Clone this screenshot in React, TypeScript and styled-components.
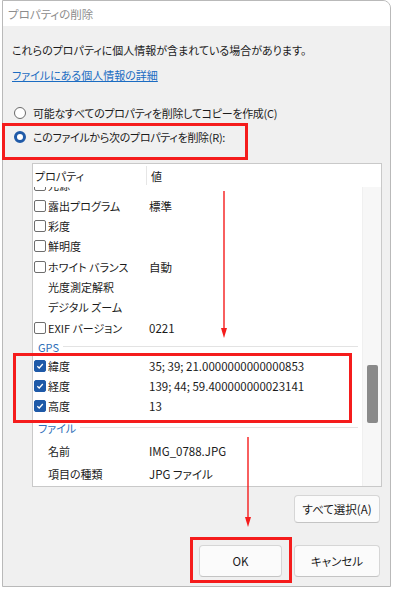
import styled, { createGlobalStyle } from "styled-components"

const FONT = `"Noto Sans CJK JP", "Noto Sans", sans-serif`
const RED = "#f51c1c"
const BLUE = "#1f5aa8"

const GlobalStyle = createGlobalStyle`
body {
    margin: 0;
    background: #ffffff;
    font-family: ${FONT};
    font-feature-settings: "palt";
    color: #1b1b1b;
}
`

const Canvas = styled.div`
position: relative;
width: 393px;
height: 591px;
overflow: hidden;
background: #ffffff;
`

const Dialog = styled.div`
margin-left: 2px;
width: 387px;
height: 585px;
border: 1px solid #b9b9b9;
border-top-right-radius: 8px;
background: #f0f0f0;
display: flex;
flex-direction: column;
overflow: hidden;
`

const TitleBar = styled.div`
height: 25px;
background: #ffffff;
display: flex;
align-items: center;
padding-left: 5px;
`

const Title = styled.span`
font-size: 11.5px;
color: #8d8d8d;
`

const Body = styled.div`
flex: 1;
display: flex;
flex-direction: column;
padding: 0 10px 9px 9px;
`

const Intro = styled.div`
margin-top: 16px;
font-size: 11px;
line-height: 16px;
`

const HelpLink = styled.a`
margin-top: 9px;
font-size: 11px;
line-height: 16px;
color: #1b6cc2;
text-decoration: underline;
align-self: flex-start;
`

const RadioRow = styled.div<{ $gap: number }>`
margin-top: ${p => p.$gap}px;
display: flex;
align-items: center;
height: 16px;
font-size: 11px;
letter-spacing: -0.3px;
`

const Radio = styled.span<{ $on?: boolean }>`
box-sizing: border-box;
width: 12px;
height: 12px;
margin: 0 7px 0 2px;
border-radius: 50%;
border: ${p => (p.$on ? `3.5px solid ${BLUE}` : "1px solid #6a6a6a")};
background: #ffffff;
`

const ListBox = styled.div`
margin: 18px 0 0 20px;
width: 348px;
height: 322px;
border: 1px solid #c9c9c9;
background: #ffffff;
display: flex;
flex-direction: column;
`

const ListHeader = styled.div`
height: 23px;
display: grid;
grid-template-columns: 113px 1fr;
font-size: 11px;
`

const HeaderCell = styled.div<{ $divider?: boolean }>`
display: flex;
align-items: center;
padding-left: ${p => (p.$divider ? 4 : 2)}px;
border-left: ${p => (p.$divider ? "1px solid #e6e6e6" : "none")};
margin: 2px 0;
`

const ListBody = styled.div`
flex: 1;
display: flex;
min-height: 0;
`

const Rows = styled.div`
flex: 1;
overflow: hidden;
`

const RowsInner = styled.div`
margin-top: -11.7px;
`

const Row = styled.div<{ $h: number }>`
height: ${p => p.$h}px;
display: grid;
grid-template-columns: 116px 1fr;
align-items: center;
font-size: 11px;
`

const NameCell = styled.div`
display: flex;
align-items: center;
padding-left: 15px;
white-space: nowrap;
`

const ValueCell = styled.div`
white-space: nowrap;
font-size: 11.5px;
`

const Check = styled.span<{ $on?: boolean }>`
box-sizing: border-box;
width: 12px;
height: 12px;
margin: 0 2px 0 -14px;
border-radius: 2px;
border: 1px solid ${p => (p.$on ? BLUE : "#6e6e6e")};
background: ${p => (p.$on ? BLUE : "#ffffff")};
display: flex;
align-items: center;
justify-content: center;
`

const GroupHeader = styled.div<{ $h: number }>`
height: ${p => p.$h}px;
display: flex;
align-items: center;
padding: 0 4px 0 5px;
gap: 4px;
`

const GroupLabel = styled.span`
font-size: 11px;
color: #2f6fb8;
`

const GroupLine = styled.span`
flex: 1;
height: 1px;
background: #e3e3e3;
`

const ScrollTrack = styled.div`
width: 18px;
background: #f7f7f7;
border-left: 1px solid #f0f0f0;
display: flex;
justify-content: center;
`

const ScrollThumb = styled.div`
margin-top: 178px;
width: 11px;
height: 58px;
border-radius: 2px;
background: #8a8a8a;
`

const ButtonRow = styled.div<{ $gap: number }>`
margin-top: ${p => p.$gap}px;
display: flex;
justify-content: flex-end;
gap: 12px;
`

const Button = styled.button<{ $w: number; $h: number }>`
box-sizing: border-box;
width: ${p => p.$w}px;
height: ${p => p.$h}px;
border: 1px solid #d6d6d6;
border-bottom-color: #c4c4c4;
border-radius: 4px;
background: #fbfbfb;
font-family: ${FONT};
font-feature-settings: "palt";
font-size: 11.5px;
color: #1b1b1b;
padding: 0;
`

const Mark = styled.div<{ $x: number; $y: number; $w: number; $h: number }>`
position: absolute;
left: ${p => p.$x}px;
top: ${p => p.$y}px;
width: ${p => p.$w}px;
height: ${p => p.$h}px;
box-sizing: border-box;
border: 3.5px solid ${RED};
`

const ArrowSvg = styled.svg<{ $x: number; $y: number }>`
position: absolute;
left: ${p => p.$x - 4}px;
top: ${p => p.$y}px;
`

const Arrow = ({ x, y, len }: { x: number; y: number; len: number }) => (
    <ArrowSvg $x={x} $y={y} width="8" height={len}>
        <line x1="4" y1="0" x2="4" y2={len - 8} stroke={RED} strokeWidth="1.4" />
        <polygon points={`1,${len - 10} 7,${len - 10} 4,${len}`} fill={RED} />
    </ArrowSvg>
)

const Tick = () => (
    <svg width="8" height="8" viewBox="0 0 8 8">
        <path d="M1.3 4.2 L3.2 6 L6.8 2" fill="none" stroke="#fff" strokeWidth="1.3" />
    </svg>
)

type Item =
    | { kind: "row"; name: string; value?: string; check?: "off" | "on"; h: number }
    | { kind: "group"; name: string; h: number }

const R = 20.33

const items: Item[] = [
    { kind: "row", name: "光源", check: "off", h: R },
    { kind: "row", name: "露出プログラム", value: "標準", check: "off", h: R },
    { kind: "row", name: "彩度", check: "off", h: R },
    { kind: "row", name: "鮮明度", check: "off", h: R },
    { kind: "row", name: "ホワイト バランス", value: "自動", check: "off", h: R },
    { kind: "row", name: "光度測定解釈", h: R },
    { kind: "row", name: "デジタル ズーム", h: R },
    { kind: "row", name: "EXIF バージョン", value: "0221", check: "off", h: R },
    { kind: "group", name: "GPS", h: 18 },
    { kind: "row", name: "緯度", value: "35; 39; 21.0000000000000853", check: "on", h: 20 },
    { kind: "row", name: "経度", value: "139; 44; 59.400000000023141", check: "on", h: 20 },
    { kind: "row", name: "高度", value: "13", check: "on", h: 20 },
    { kind: "group", name: "ファイル", h: 24 },
    { kind: "row", name: "名前", value: "IMG_0788.JPG", h: 23 },
    { kind: "row", name: "項目の種類", value: "JPG ファイル", h: 22 },
]

export default function App() {
    return (
        <Canvas>
            <GlobalStyle />
            <Dialog>
                <TitleBar>
                    <Title>プロパティの削除</Title>
                </TitleBar>
                <Body>
                    <Intro>これらのプロパティに個人情報が含まれている場合があります。</Intro>
                    <HelpLink href="#">ファイルにある個人情報の詳細</HelpLink>
                    <RadioRow $gap={22}>
                        <Radio />
                        可能なすべてのプロパティを削除してコピーを作成(C)
                    </RadioRow>
                    <RadioRow $gap={8}>
                        <Radio $on />
                        このファイルから次のプロパティを削除(R):
                    </RadioRow>
                    <ListBox>
                        <ListHeader>
                            <HeaderCell>プロパティ</HeaderCell>
                            <HeaderCell $divider>値</HeaderCell>
                        </ListHeader>
                        <ListBody>
                            <Rows>
                                <RowsInner>
                                    {items.map((it, i) =>
                                        it.kind === "group" ? (
                                            <GroupHeader key={i} $h={it.h}>
                                                <GroupLabel>{it.name}</GroupLabel>
                                                <GroupLine />
                                            </GroupHeader>
                                        ) : (
                                            <Row key={i} $h={it.h}>
                                                <NameCell>
                                                    {it.check && (
                                                        <Check $on={it.check === "on"}>
                                                            {it.check === "on" && <Tick />}
                                                        </Check>
                                                    )}
                                                    {it.name}
                                                </NameCell>
                                                <ValueCell>{it.value}</ValueCell>
                                            </Row>
                                        )
                                    )}
                                </RowsInner>
                            </Rows>
                            <ScrollTrack>
                                <ScrollThumb />
                            </ScrollTrack>
                        </ListBody>
                    </ListBox>
                    <ButtonRow $gap={8}>
                        <Button $w={86} $h={28}>すべて選択(A)</Button>
                    </ButtonRow>
                    <ButtonRow $gap={22}>
                        <Button $w={83} $h={32}>OK</Button>
                        <Button $w={86} $h={32}>キャンセル</Button>
                    </ButtonRow>
                </Body>
            </Dialog>

            <Mark $x={2} $y={123} $w={246} $h={37} />
            <Mark $x={13} $y={353} $w={339} $h={70} />
            <Mark $x={190} $y={537} $w={102} $h={46} />
            <Arrow x={224} y={191} len={147} />
            <Arrow x={248} y={437} len={90} />
        </Canvas>
    )
}
